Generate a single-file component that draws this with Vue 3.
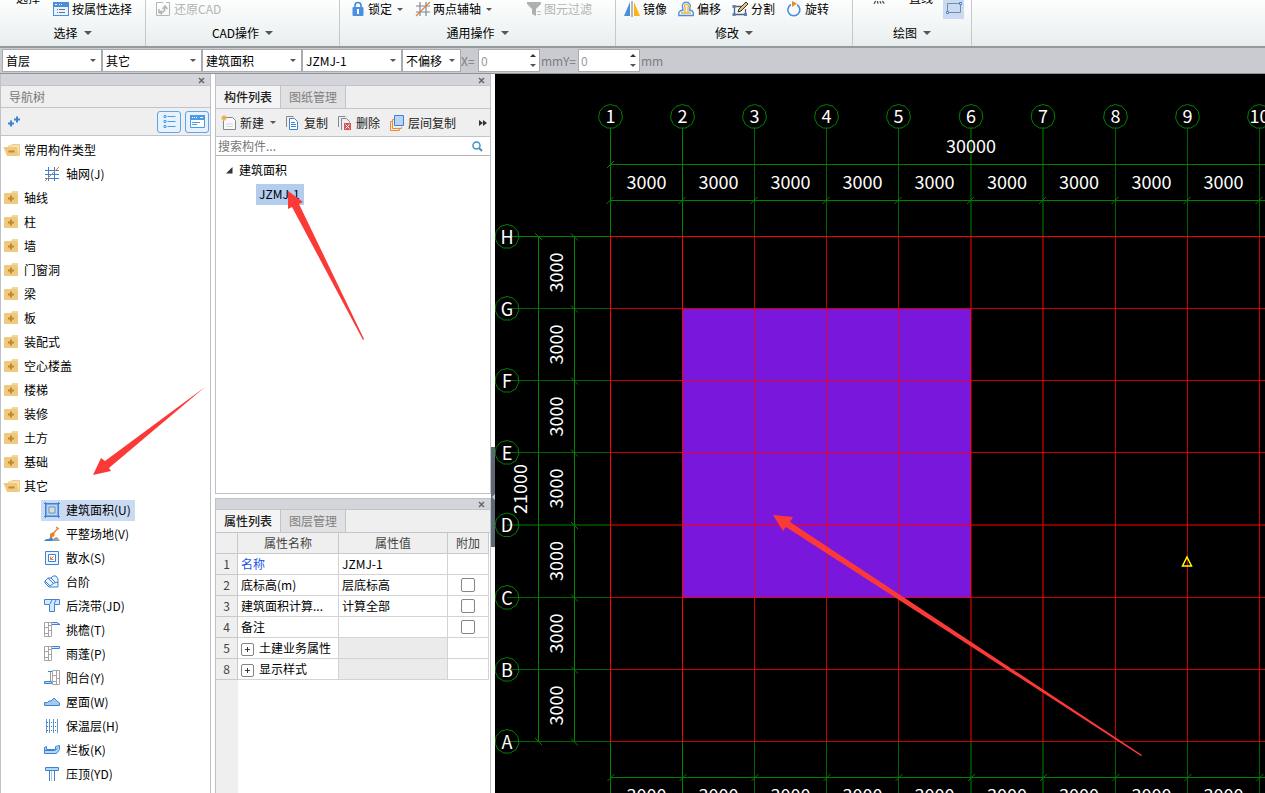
<script setup>
import { ref } from 'vue'

const icons = {
  attr: '<rect x="0.5" y="1.5" width="15" height="13" fill="#eaf3fc" stroke="#4a8fdc"/><path d="M0 1h16v5H0z" fill="#4a8fdc"/><path d="M2 3h2v1H2zM6 3h1v1H6zM8 3h1v1H8z" fill="#fff"/><path d="M4 8.5h1M6 8.5h6M4 11.5h1M6 11.5h6" stroke="#6b7480"/>',
  restore: '<path d="M8 1.500H1.500v13h13V1.500H11" fill="none" stroke="#b4b4b4"/><path d="M4 8v3.500h2c3 0 4-2 4-5.500M7.500 8L10 5l2.500 3" fill="none" stroke="#b4b4b4" stroke-width="1.500"/><path d="M7 9v5l-4-2.500z" fill="#b4b4b4"/>',
  lock: '<path d="M5 7V4.500a3 3 0 0 1 6 0V7" fill="none" stroke="#4285d6" stroke-width="1.600"/><rect x="2.500" y="6" width="11" height="9" rx="1" fill="#4a90e2"/><path d="M8 8v2M8 10v3" stroke="#fff" stroke-width="2"/>',
  axis: '<path d="M5 1v14M11 1v14M1 5h14M1 11h14" stroke="#7d8792" stroke-width="1.200"/><path d="M1 15L15 1" stroke="#df8042" stroke-width="1.200"/>',
  filter: '<path d="M1 1h14v2l-5 5v7l-4-2V8L1 3z" fill="#b0b0b0"/><path d="M11 10.500h4M11 13.500h4" stroke="#c4c4c4"/>',
  mirror: '<path d="M6 1v14H0z" fill="#4a90d8"/><path d="M10 1v14h6z" fill="#fcb314"/><path d="M8 0v16" stroke="#777"/>',
  offset: '<path d="M0.800 14.500v-3l2-2h2V7a4 4 0 1 1 7 0v2.500h2l1.500 2v3z" fill="none" stroke="#4a8fdc" stroke-width="1.300"/><path d="M3 12h10M7 11V6.500a2 2 0 1 1 3 0V11" fill="none" stroke="#f0ac36" stroke-width="1.300"/>',
  split: '<path d="M1 5.500h10M1 13.500h14M2.500 4v11M13.500 8v7" fill="none" stroke="#4f6485" stroke-width="1.300"/><path d="M0.500 4h3v3h-3zM0.500 12h3v3h-3zM12 12h3v3h-3z" fill="#6380ad"/><path d="M6 11l1-3 7-7 2 2-7 7z" fill="#e9c46d" stroke="#333"/>',
  rotate: '<path d="M5 3.500a6 6 0 1 0 6 .2" fill="none" stroke="#4a8fdc" stroke-width="1.600"/><path d="M6 0l5 2.500L6 6z" fill="#ef8b26"/>',
  rect: '<path d="M1.500 3.500h13v9h-13z" fill="none" stroke="#7f8a97"/><path d="M13.500 2.500h2v2h-2zM.5 11.500h2v2h-2z" fill="#fff" stroke="#3d82d6"/>',
  closed: '<path d="M8 1h6v2H7z" fill="#f3d79e"/><rect x="0" y="3" width="14" height="11" rx="1" fill="#efc97f"/><path d="M7 5.500v6M4 8.500h6" stroke="#c08a2e" stroke-width="2"/>',
  open: '<path d="M4 4.500l5-2h6.500v11" fill="#f7e2b6" stroke="#efc97f"/><path d="M-.5 5h13.500l2 9H3z" fill="#efc97f"/><path d="M4.500 9.500h6" stroke="#c08a2e" stroke-width="2"/>',
  grid: '<path d="M4.500 1v14M10.500 1v14M1 4.500h14M1 8.500h14M1 12.500h14" stroke="#3d82d6"/><path d="M1 15L15 1" stroke="#df7a35"/>',
  area: '<path d="M2 2h12v12H2z" fill="#b6d6f6" stroke="#3d82d6"/><path d="M5 5h6v6H5z" fill="#d8dde2" stroke="#7a8fa5"/><path d="M0 1.500h16M0 14.500h16M1.500 0v16M14.500 0v16" stroke="#3d82d6"/>',
  ground: '<path d="M0 15l2-2h3l2-3 3 5z" fill="#3f86d8"/><path d="M8 15l2-3 3-1 3 4z" fill="#9aa0a6"/><path d="M6 8l3-2 2 3-2 2-3 1z" fill="#f07e26"/><path d="M9 8l5-6M12 1l3 2" stroke="#f07e26" stroke-width="1.300"/>',
  water: '<path d="M1.500 1.500h13v13h-13z" fill="#edf5fd" stroke="#3d82d6" /><path d="M4.500 4.500h7v7h-7z" fill="#fff" stroke="#3d82d6"/><path d="M6.500 9.500l3-3M6.500 6.500v3h3" fill="none" stroke="#ef7d26"/>',
  step: '<path d="M1 7l3-3h3l2-2h3l2 3v8H5L1 9z" fill="#eaf4fd" stroke="#3d82d6"/><path d="M1 7l5 5M4 4l6 6M7 4l5 5M6 12l4-3 4-1" fill="none" stroke="#3d82d6"/>',
  strip: '<path d="M.5 1.500h15v5h-5v7h-5v-7h-5z" fill="#d5e9fc" stroke="#3d82d6"/><path d="M6 6l2-4M10 6l2-4" stroke="#3d82d6"/>',
  eave: '<path d="M.5 .5h7v14h-7zM4.500 .5v14M.5 5.500h4M4.500 8.500h3M.5 11.500h4M4.500 3.500h3" fill="none" stroke="#a4a4a4"/><path d="M8 .5h5l3 2H8" fill="#d5e9fc" stroke="#3d82d6"/>',
  canopy: '<path d="M.5 .5h7v14h-7zM4.500 .5v14M.5 5.500h4M4.500 8.500h3M.5 11.500h4M4.500 3.500h3" fill="none" stroke="#a4a4a4"/><path d="M8 .5h7.500v2H8" fill="#d5e9fc" stroke="#3d82d6"/>',
  balcony: '<path d="M8.500 .5h7v14h-7zM12.500 .5v14M8.500 5.500h4M12.500 8.500h3M8.500 11.500h4" fill="none" stroke="#a4a4a4"/><path d="M4 1.500h4M.5 11.500h7v2h-7z" fill="#b6d6f6" stroke="#3d82d6"/><path d="M6.500 2v9" stroke="#999"/>',
  roof: '<path d="M.5 11.500V8.500h3L5 7h2l3-3 3 3 2.500 2v2.500z" fill="#a5c9ef" stroke="#3d82d6"/>',
  insul: '<path d="M2.500 1v14M5.500 1v14M13.500 1v14M9.500 1v14" stroke="#5597e2"/><path d="M3 4.500h10M3 8.500h10M3 12.500h10" stroke="#5a708a" stroke-dasharray="1 1"/>',
  rail: '<path d="M.5 5.500l2-1v3h9v-3l4-1v4l-3 4h-12z" fill="#b6d6f6" stroke="#3d82d6"/><path d="M.5 8.500h10l3-2" fill="none" stroke="#3d82d6"/>',
  coping: '<path d="M1.500 1.500h13v3h-13z" fill="#b6d6f6" stroke="#3d82d6"/><path d="M5.500 5v10M10.500 5v10" stroke="#3d82d6"/><path d="M7.500 5v10" stroke="#a9c8ea"/>',
  blob: '<path d="M5 3.500h6l3 2H6z" fill="#b6d6f6" stroke="#3d82d6"/>',
  create: '<path d="M4.500 2.500h7l3 3v9h-12v-9" fill="#fafafa" stroke="#7f8a97"/><path d="M5 9h7M5 11.500h7" stroke="#d6d6de"/><path d="M1 1l4 4M5 1L1 5M3 0v6M0 3h6" stroke="#eda22e"/>',
  copy: '<path d="M1.500 12V1.500h7" fill="none" stroke="#7f8a97"/><path d="M4.500 3.500h5l3 3v8h-8z" fill="#fff" stroke="#3d82d6"/><path d="M6 7.500h4M6 9.500h5M6 11.500h5" stroke="#3d82d6"/>',
  remove: '<path d="M1.500 12V1.500h7M4.500 15V3.500h5l3 3v1" fill="none" stroke="#7f8a97"/><path d="M7 8h7v7H7z" fill="#d65555"/><path d="M8.500 9.500l4 4M12.500 9.500l-4 4" stroke="#fff"/>',
  layer: '<path d="M3 6.500H1.500v9h9V14M5 4.500H3.500v9h9V12" fill="none" stroke="#ee8a34"/><path d="M5.500 .5h9v10h-9z" fill="#b6d6f8" stroke="#3d82d6"/>',
}

const closedNodes = ['轴线', '柱', '墙', '门窗洞', '梁', '板', '装配式', '空心楼盖', '楼梯', '装修', '土方', '基础']
const navRows = [
  { text: '常用构件类型', icon: 'open' },
  { text: '轴网(J)', icon: 'grid', child: true },
  ...closedNodes.map((text) => ({ text, icon: 'closed' })),
  { text: '其它', icon: 'open' },
  ...[
    ['建筑面积(U)', 'area'], ['平整场地(V)', 'ground'], ['散水(S)', 'water'], ['台阶', 'step'],
    ['后浇带(JD)', 'strip'], ['挑檐(T)', 'eave'], ['雨蓬(P)', 'canopy'], ['阳台(Y)', 'balcony'],
    ['屋面(W)', 'roof'], ['保温层(H)', 'insul'], ['栏板(K)', 'rail'], ['压顶(YD)', 'coping'], ['', 'blob'],
  ].map(([text, icon]) => ({ text, icon, child: true })),
]
const selected = ref('建筑面积(U)')

const combos = ['首层', '其它', '建筑面积', 'JZMJ-1']
const offsets = [{ id: 'off-x', label: 'X=' }, { id: 'off-y', label: 'Y=' }]

const tools = [
  { icon: 'create', text: '新建', caret: true },
  { icon: 'copy', text: '复制' },
  { icon: 'remove', text: '删除' },
  { icon: 'layer', text: '层间复制' },
]

const props = [
  { no: 1, name: '名称', value: 'JZMJ-1', link: true },
  { no: 2, name: '底标高(m)', value: '层底标高', check: true },
  { no: 3, name: '建筑面积计算...', value: '计算全部', check: true },
  { no: 4, name: '备注', value: '', check: true },
  { no: 5, name: '土建业务属性', group: true },
  { no: 8, name: '显示样式', group: true },
]

// Axis positions inside the drawing viewport.
const cols = [115.5, 187.5, 259.5, 331.5, 403.5, 476, 548, 620.5, 692.5, 764.5].map((x, i) => {
  const wide = i === 5 || i === 6
  return { x, label: String(i + 1), w: wide ? 2 : 1, o: i < 2 ? 1 : wide ? 0.5 : 0.78 }
})
const rows = [162.5, 234.5, 306.5, 378.5, 451, 523.5, 595.5, 667.5].map((y, i) => ({
  y, label: 'HGFEDCBA'[i], w: i === 4 ? 2 : 1, o: i === 0 ? 1 : i === 4 ? 0.5 : 0.78,
}))
const ring = (cx, cy) =>
  Array.from({ length: 11 }, (_, i) => {
    const a = (i * 2 * Math.PI) / 11 - Math.PI / 2
    return `${(cx + 12 * Math.cos(a)).toFixed(1)},${(cy + 12 * Math.sin(a)).toFixed(1)}`
  }).join(' ')
</script>

<template>
  <div class="app">
    <header class="ribbon">
      <section class="group g-select">
        <div class="row">
          <button class="big">选择</button>
          <button class="cmd"><svg class="ico" viewBox="0 0 16 16" v-html="icons.attr" />按属性选择</button>
        </div>
        <button class="caption">选择<i class="caret wide" /></button>
      </section>
      <section class="group g-cad">
        <div class="row">
          <button class="cmd" disabled><svg class="ico" viewBox="0 0 16 16" v-html="icons.restore" />还原CAD</button>
        </div>
        <button class="caption">CAD操作<i class="caret wide" /></button>
      </section>
      <section class="group g-common">
        <div class="row">
          <button class="cmd"><svg class="ico" viewBox="0 0 16 16" v-html="icons.lock" />锁定<i class="caret" /></button>
          <button class="cmd"><svg class="ico" viewBox="0 0 16 16" v-html="icons.axis" />两点辅轴<i class="caret" /></button>
          <button class="cmd filter" disabled><svg class="ico" viewBox="0 0 16 16" v-html="icons.filter" />图元过滤</button>
        </div>
        <button class="caption">通用操作<i class="caret wide" /></button>
      </section>
      <section class="group g-modify">
        <div class="row">
          <button class="cmd"><svg class="ico" viewBox="0 0 16 16" v-html="icons.mirror" />镜像</button>
          <button class="cmd"><svg class="ico" viewBox="0 0 16 16" v-html="icons.offset" />偏移</button>
          <button class="cmd"><svg class="ico" viewBox="0 0 16 16" v-html="icons.split" />分割</button>
          <button class="cmd"><svg class="ico" viewBox="0 0 16 16" v-html="icons.rotate" />旋转</button>
        </div>
        <button class="caption">修改<i class="caret wide" /></button>
      </section>
      <section class="group g-draw">
        <div class="row">
          <button class="big">点</button>
          <button class="big">直线</button>
          <button class="shape" aria-label="矩形"><svg class="ico" viewBox="0 0 16 16" v-html="icons.rect" /></button>
        </div>
        <button class="caption">绘图<i class="caret wide" /></button>
      </section>
    </header>

    <div class="optbar">
      <label v-for="c in combos" :key="c" class="combo">
        <select :aria-label="c"><option>{{ c }}</option></select><i class="caret" />
      </label>
      <label class="combo short">
        <select aria-label="偏移方式"><option>不偏移</option></select><i class="caret" />
      </label>
      <div v-for="o in offsets" :key="o.id" class="offset">
        <label :for="o.id">{{ o.label }}</label>
        <span class="spin">
          <input :id="o.id" type="text" value="0" disabled />
          <span class="steps"><i class="up" /><i class="caret" /></span>
        </span>
        <span class="unit">mm</span>
      </div>
    </div>

    <main class="work">
      <aside class="nav">
        <div class="grip"><button aria-label="关闭"><svg viewBox="0 0 7 7"><path d="M1 1l5 5M6 1L1 6" stroke="#666" stroke-width="1.500" /></svg></button></div>
        <h2 class="title">导航树</h2>
        <div class="navtools">
          <button class="add" aria-label="展开">
            <svg viewBox="0 0 13 11"><path d="M0 7.500h6M3 4.500v6M6 3.500h6M9 .5v6" stroke="#3d82d6" stroke-width="2" /></svg>
          </button>
          <button class="view" aria-label="列表">
            <svg viewBox="0 0 12 13"><path d="M.5 .5h2v2h-2zM.5 5.500h2v2h-2zM.5 10.500h2v2h-2zM4 1.500h8M4 6.500h8M4 11.500h8" fill="none" stroke="#4a9bea" /></svg>
          </button>
          <button class="view" aria-label="面板">
            <svg viewBox="0 0 15 13"><path d="M.5 .5h14v12h-14z" fill="#fff" stroke="#4a9bea" /><path d="M0 0h15v5H0z" fill="#4a9bea" /><path d="M2 2.500h1M4 2.500h1M6 2.500h1M10 2.500h3" stroke="#fff" /><path d="M2 7.500h8M2 9.500h5" stroke="#4a9bea" /></svg>
          </button>
        </div>
        <ul class="tree">
          <li v-for="(r, i) in navRows" :key="i" :class="{ child: r.child }">
            <button :class="{ on: r.text === selected }" :aria-label="r.text || '更多'" @click="selected = r.text">
              <svg class="ico" viewBox="0 0 16 16" v-html="icons[r.icon]" /><span>{{ r.text }}</span>
            </button>
          </li>
        </ul>
      </aside>

      <div class="middle">
        <section class="panel list">
          <div class="grip"><button aria-label="关闭"><svg viewBox="0 0 7 7"><path d="M1 1l5 5M6 1L1 6" stroke="#666" stroke-width="1.500" /></svg></button></div>
          <div class="tabs"><button class="active">构件列表</button><button>图纸管理</button></div>
          <div class="tools">
            <button v-for="t in tools" :key="t.text"><svg class="ico" viewBox="0 0 16 16" v-html="icons[t.icon]" />{{ t.text }}<i v-if="t.caret" class="caret" /></button>
            <button class="more" aria-label="更多">
              <svg viewBox="0 0 8 6"><path d="M0 0l4 3-4 3zM4 0l4 3-4 3z" fill="#333" /></svg>
            </button>
          </div>
          <label class="search">
            <input type="text" placeholder="搜索构件..." aria-label="搜索构件" />
            <svg viewBox="0 0 11 11"><circle cx="4.500" cy="4.500" r="3.500" fill="none" stroke="#3f93c8" stroke-width="1.500" /><path d="M7 7l3 3" stroke="#3f93c8" stroke-width="2" /></svg>
          </label>
          <ul class="parts">
            <li><svg viewBox="0 0 7 7"><path d="M6.500 0v6.500H0z" fill="#333" /></svg>建筑面积</li>
            <li class="leaf"><button>JZMJ-1</button></li>
          </ul>
        </section>

        <section class="panel attrs">
          <div class="grip"><button aria-label="关闭"><svg viewBox="0 0 7 7"><path d="M1 1l5 5M6 1L1 6" stroke="#666" stroke-width="1.500" /></svg></button></div>
          <div class="tabs"><button class="active">属性列表</button><button>图层管理</button></div>
          <div class="sheet">
            <table>
              <colgroup><col class="c-no" /><col class="c-name" /><col class="c-val" /><col class="c-add" /></colgroup>
              <thead><tr><th></th><th>属性名称</th><th>属性值</th><th>附加</th></tr></thead>
              <tbody>
                <tr v-for="p in props" :key="p.no">
                  <th>{{ p.no }}</th>
                  <td :class="{ link: p.link }"><button v-if="p.group" class="plus" :aria-label="'展开' + p.name"><svg viewBox="0 0 11 11"><path d="M3 5.500h5M5.500 3v5" stroke="#333" /></svg></button>{{ p.name }}</td>
                  <td :class="{ off: p.group }">{{ p.value }}</td>
                  <td class="mid"><input v-if="p.check" type="checkbox" :aria-label="p.name" /></td>
                </tr>
              </tbody>
            </table>
          </div>
        </section>
      </div>

      <div class="splitter">
        <button aria-label="收起"><svg viewBox="0 0 3 6"><path d="M3 0v6L0 3z" fill="#c3cad0" /></svg></button>
      </div>

      <svg class="canvas">
        <rect x="188" y="235" width="288" height="289" fill="#7a17dc" />
        <g stroke="#008200">
          <path d="M115 90.500H3000M115 126.500H3000M115 703.500H3000M43.500 162v506M79.500 162v506" />
          <g v-for="c in cols" :key="c.label" :stroke-opacity="c.o" :stroke-width="c.w">
            <path :d="`M${c.x} 54V162M${c.x} 668V1200`" />
          </g>
          <g v-for="r in rows" :key="r.label" :stroke-opacity="r.o" :stroke-width="r.w">
            <path :d="`M12 ${r.y}H115`" />
          </g>
          <path v-for="c in cols" :key="c.x" :d="`M${c.x - 4} 130l7 -7M${c.x - 3} 707l7 -7`" />
          <path v-for="r in rows" :key="r.y" :d="`M76 ${r.y - 3}l7 7`" />
          <path d="M112 94l7 -7M40 159l7 7M40 664l7 7" />
        </g>
        <g stroke="#ff0000">
          <path v-for="c in cols" :key="c.x" :d="`M${c.x} 162V668`" :stroke-width="c.w" :stroke-opacity="c.o" />
          <path v-for="r in rows" :key="r.y" :d="`M115 ${r.y}H3000`" :stroke-width="r.w" :stroke-opacity="r.o" />
        </g>
        <g fill="none" stroke="#008200">
          <polygon v-for="c in cols" :key="c.x" :points="ring(c.x, 42.5)" />
          <polygon v-for="r in rows" :key="r.y" :points="ring(12, r.y)" />
        </g>
        <g class="dims">
          <text v-for="c in cols" :key="c.x" :x="c.x" y="49">{{ c.label }}</text>
          <text v-for="r in rows" :key="r.y" x="12" :y="r.y + 7">{{ r.label }}</text>
          <text x="476" y="79">30000</text>
          <template v-for="c in cols" :key="c.x">
            <text :x="c.x + 36" y="115">3000</text>
            <text :x="c.x + 36" y="728">3000</text>
          </template>
          <text v-for="r in rows.slice(0, 7)" :key="r.y" :transform="`translate(68 ${r.y + 36}) rotate(-90)`">3000</text>
          <text transform="translate(32 415) rotate(-90)">21000</text>
        </g>
        <path d="M692 483l4.500 9h-9z" fill="none" stroke="#ffff00" stroke-width="1.500" />
      </svg>
    </main>

    <svg class="arrows" aria-hidden="true">
      <path d="M288 191L303 202L299 204L364 339L363 340L292 207L288 209Z" />
      <path d="M93 475L101 458L105 461L205 387L109 468L111 471Z" />
      <path d="M773 515L793 517L790 522L1142 755L1141 756L786 527L783 531Z" />
    </svg>
  </div>
</template>

<style>
html,
body {
  overflow: hidden;
}
</style>

<style scoped>
.app {
  position: relative;
  display: flex;
  flex-direction: column;
  height: 100vh;
  background: #fff;
  color: #000;
  font: 12px/16px "Noto Sans CJK SC", "Noto Sans", sans-serif;
}
* { box-sizing: border-box; }
button, input, select { font: inherit; color: inherit; }
button {
  display: flex;
  align-items: center;
  padding: 0;
  border: 0;
  background: none;
  white-space: nowrap;
}
ul { list-style: none; margin: 0; padding: 0; }
svg { display: block; flex: none; }
.ico { width: 16px; height: 16px; overflow: visible; }
.caret {
  flex: none;
  border: 3px solid transparent;
  border-top-color: #555;
  border-bottom: 0;
}
.caret.wide { border-width: 4px 4px 0; margin-left: 6px; }

.ribbon {
  flex: none;
  display: flex;
  height: 48px;
  overflow: hidden;
  background: linear-gradient(#fdfefe, #e8eeee);
  border-bottom: 2px solid #96999c;
}
.group {
  flex: none;
  display: flex;
  flex-direction: column;
  justify-content: flex-end;
  align-items: stretch;
  padding-bottom: 1px;
  border-right: 1px solid #c6c8ca;
}
.row { flex: none; display: flex; align-items: flex-end; height: 30px; }
.cmd { height: 24px; gap: 3px; }
.cmd .caret { margin-left: 3px; }
button:disabled { color: #b4b4b4; }
.big { align-self: flex-start; height: 14px; }
.caption { flex: none; justify-content: center; height: 24px; }
.g-select { width: 146px; }
.g-select .row { padding-left: 16px; gap: 13px; }
.g-cad { width: 194px; }
.g-cad .row { padding-left: 9px; }
.g-common { width: 276px; }
.g-common .row { padding-left: 10px; gap: 12px; }
.g-common .cmd { gap: 2px; }
.g-common .filter { margin-left: 22px; }
.g-modify { width: 237px; }
.g-modify .row { padding-left: 8px; gap: 11px; }
.g-draw { width: 119px; }
.g-draw .row { padding-left: 20px; gap: 24px; }
.shape {
  justify-content: center;
  width: 21px;
  height: 22px;
  margin: 0 0 2px -14px;
  background: #c9daf2;
}

.optbar {
  flex: none;
  display: flex;
  align-items: center;
  height: 26px;
  padding-left: 2px;
  background: #c9cbd0;
  border-bottom: 1px solid #8f9296;
  color: #7b7d80;
}
.combo {
  position: relative;
  display: flex;
  align-items: center;
  width: 100px;
  height: 23px;
  background: #fff;
  border: 1px solid #a9abaf;
  color: #000;
}
.combo.short { width: 59px; }
.combo select {
  width: 100%;
  height: 21px;
  padding: 0 12px 0 3px;
  border: 0;
  background: none;
  appearance: none;
}
.combo .caret { position: absolute; right: 5px; }
.offset { display: flex; align-items: center; }
.offset label { width: 17px; }
.offset + .offset label { width: 15px; }
.offset .unit { width: 23px; padding-left: 1px; }
.spin {
  display: flex;
  width: 62px;
  height: 23px;
  background: #fff;
  border: 1px solid #a9abaf;
}
.spin input {
  flex: 1;
  min-width: 0;
  padding: 0 2px;
  border: 0;
  background: none;
  color: #9a9a9a;
}
.steps {
  display: flex;
  flex-direction: column;
  justify-content: space-between;
  padding: 4px 3px;
}
.up { border: 3px solid transparent; border-bottom-color: #333; border-top: 0; }

.work { flex: 1; min-height: 0; display: flex; }
.nav {
  flex: none;
  display: flex;
  flex-direction: column;
  width: 211px;
  margin-right: 4px;
  overflow: hidden;
  border: 1px solid #bfc1c9;
  border-width: 0 1px;
}
.grip {
  flex: none;
  display: flex;
  justify-content: flex-end;
  align-items: center;
  height: 12px;
  padding: 1px 5px 0 0;
  background: #d4d5da;
  border-bottom: 1px solid #c3c4cb;
}
.grip svg { width: 7px; height: 7px; }
.title {
  flex: none;
  margin: 0;
  padding-left: 8px;
  font: inherit;
  line-height: 21px;
  color: #777;
  background: #efefef;
  border-bottom: 1px solid #c3c4cb;
}
.navtools {
  flex: none;
  display: flex;
  align-items: center;
  gap: 4px;
  height: 28px;
  padding: 0 1px 0 7px;
  background: #efefef;
  border-bottom: 1px solid #c3c4cb;
}
.add { margin-right: auto; }
.add svg { width: 13px; height: 11px; }
.view {
  justify-content: center;
  width: 24px;
  height: 22px;
  background: #e8f2fc;
  border: 1px solid #5aa5ee;
  border-radius: 3px;
}
.view svg { height: 13px; width: 15px; }
.tree { flex: 1; min-height: 0; padding-top: 2px; overflow: hidden; }
.tree li { display: flex; align-items: center; height: 24px; padding-left: 2px; }
.tree li.child { padding-left: 40px; }
.tree button { height: 21px; gap: 4px; padding: 0 4px 0 1px; }
.tree .child button { gap: 6px; padding-left: 3px; }
.tree button.on { background: #c9daf2; }

.middle { flex: none; display: flex; flex-direction: column; gap: 4px; width: 276px; }
.panel {
  display: flex;
  flex-direction: column;
  min-height: 0;
  border: 1px solid #bfc1c9;
  border-top: 0;
}
.list { flex: 420 1 0; }
.attrs { flex: 295 1 0; border-top: 1px solid #bfc1c9; border-bottom: 0; }
.attrs .grip { height: 11px; }
.tabs {
  flex: none;
  display: flex;
  height: 23px;
  background: #efefef;
  border-bottom: 1px solid #c3c4cb;
}
.tabs button {
  justify-content: center;
  width: 65px;
  color: #808080;
  background: #e1e1e3;
  border-right: 1px solid #c3c4cb;
}
.tabs .active { color: #222; background: #f4f4f4; font-weight: 500; }
.tools {
  flex: none;
  display: flex;
  align-items: center;
  gap: 9px;
  height: 28px;
  padding: 0 3px 0 5px;
  background: #efefef;
  border-bottom: 1px solid #c3c4cb;
  color: #222;
}
.tools button { gap: 3px; }
.tools .caret { margin-left: 3px; }
.more { margin-left: auto; }
.more svg { width: 8px; height: 6px; }
.search {
  flex: none;
  display: flex;
  align-items: center;
  height: 19px;
  padding: 0 7px 0 2px;
  border-bottom: 1px solid #b4b6ba;
}
.search input { flex: 1; min-width: 0; padding: 0; border: 0; outline: 0; }
.search input::placeholder { color: #777; opacity: 1; }
.search svg { width: 11px; height: 11px; }
.parts { padding-top: 2px; }
.parts li { display: flex; align-items: center; gap: 6px; height: 24px; padding-left: 10px; }
.parts li svg { width: 7px; height: 7px; }
.parts .leaf { padding-left: 40px; }
.leaf button { height: 21px; padding: 0 4px 0 3px; background: #b3cdee; }

.sheet {
  flex: 1;
  min-height: 0;
  overflow: hidden;
  background: linear-gradient(90deg, #efefef 22px, #fff 22px);
}
table {
  width: 273px;
  table-layout: fixed;
  border-collapse: separate;
  border-spacing: 0;
}
.c-no { width: 22px; }
.c-name { width: 101px; }
.c-val { width: 109px; }
.c-add { width: 41px; }
th, td {
  height: 21px;
  padding: 0 3px;
  border: 1px solid #d3d3d3;
  border-width: 0 1px 1px 0;
  line-height: 16px;
  white-space: nowrap;
  overflow: hidden;
}
th { font-weight: 400; color: #444; background: #efefef; border-color: #c8c9cd; text-align: center; }
td.off { background: #ebebeb; }
td.link { color: #1a55e8; }
td.mid { text-align: center; }
td input {
  appearance: none;
  display: block;
  width: 14px;
  height: 14px;
  margin: 0 auto;
  border: 1px solid #858585;
  border-radius: 2px;
  background: #fff;
}
.plus {
  display: inline-flex;
  width: 13px;
  height: 13px;
  margin-right: 5px;
  border: 1px solid #858585;
  border-radius: 2px;
  vertical-align: -2px;
}
.plus svg { width: 11px; height: 11px; }

.splitter { flex: none; display: flex; flex-direction: column; width: 4px; }
.splitter::before { content: ""; flex: 373 1 0; }
.splitter::after { content: ""; flex: 246 1 0; }
.splitter button { width: 4px; height: 100px; background: #5e6973; justify-content: flex-end; }
.splitter svg { width: 3px; height: 6px; }

.canvas { flex: 1 1 0; min-width: 0; height: 100%; background: #000; overflow: hidden; }
.dims { fill: #fff; font-size: 18px; text-anchor: middle; }
.arrows {
  position: absolute;
  inset: 0;
  width: 100%;
  height: 100%;
  fill: #fb3a38;
  pointer-events: none;
}
</style>
